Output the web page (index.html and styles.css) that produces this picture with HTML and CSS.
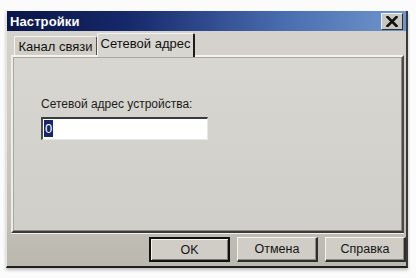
FILE: index.html
```html
<!DOCTYPE html>
<html>
<head>
<meta charset="utf-8">
<link rel="stylesheet" href="styles.css">
</head>
<body>
<div class="window">
  <div class="titlebar">
    <span class="title">Настройки</span>
    <span class="close">
      <svg width="12" height="11" viewBox="0 0 12 11"><path d="M1.5 1 L10.5 10 M10.5 1 L1.5 10" stroke="#111" stroke-width="2.6" stroke-linecap="square"/></svg>
    </span>
  </div>
  <div class="content">
    <div class="tabs">
      <div class="tab">Канал связи</div>
      <div class="tab active">Сетевой адрес</div>
    </div>
    <div class="panel">
      <div class="label">Сетевой адрес устройства:</div>
      <div class="input"><span class="sel">0</span></div>
    </div>
    <div class="buttons">
      <div class="btn default">OK</div>
      <div class="btn">Отмена</div>
      <div class="btn">Справка</div>
    </div>
  </div>
</div>
</body>
</html>
```
FILE: styles.css
```css
html, body {
  margin: 0;
  padding: 0;
  background: #fbfbfb;
  width: 416px;
  height: 278px;
  overflow: hidden;
  font-family: "Liberation Sans", Arial, sans-serif;
}
.window {
  margin: 11px 0 0 6px;
  width: 402px;
  height: 257px;
  box-sizing: border-box;
  background: linear-gradient(to bottom, #d6d4ce 0%, #cdcac3 50%, #bbb8b0 100%);
  border-right: 2px solid #3a3a38;
  border-bottom: 2px solid #1e1e1c;
  border-left: 1px solid #e6e4de;
  box-shadow: 0 2px 3px rgba(0,0,0,0.25);
  display: flex;
  flex-direction: column;
}
.titlebar {
  height: 20px;
  background: linear-gradient(to right, #0a1548 0%, #15286a 30%, #4a6eb0 70%, #7096cc 100%);
  display: flex;
  align-items: center;
  justify-content: space-between;
  padding: 0 3px 0 3px;
}
.title {
  color: #fff;
  font-weight: bold;
  font-size: 13px;
  letter-spacing: 0.1px;
}
.close {
  width: 20px;
  height: 15px;
  background: #c8c6c0;
  border-top: 1px solid #f2f2f0;
  border-left: 1px solid #f2f2f0;
  border-right: 1px solid #303030;
  border-bottom: 1px solid #303030;
  display: flex;
  align-items: center;
  justify-content: center;
}
.content {
  flex: 1;
  display: flex;
  flex-direction: column;
  padding: 1px 0 0 4px;
}
.tabs {
  display: flex;
  align-items: flex-end;
  height: 23px;
  padding-left: 3px;
  position: relative;
  z-index: 1;
}
.tab {
  height: 19px;
  padding: 0;
  box-sizing: border-box;
  border-top: 1px solid #f4f3ef;
  border-left: 1px solid #f4f3ef;
  border-right: 1px solid #505050;
  border-radius: 2px 2px 0 0;
  font-size: 13px;
  color: #111;
  line-height: 19px;
  background: #d0cec7;
  width: 83px;
  text-align: center;
  white-space: nowrap;
}
.tab.active {
  height: 24px;
  width: 98px;
  margin-bottom: -2px;
  line-height: 20px;
  background: #d8d6d0;
  border-right: 2px solid #1a1a1a;
}
.panel {
  width: 393px;
  height: 178px;
  box-sizing: border-box;
  border-top: 2px solid #f4f3ef;
  border-left: 2px solid #eeede8;
  border-right: 2px solid #4a4a48;
  border-bottom: 2px solid #3a3a38;
  box-shadow: inset -1px -1px 0 #8a8882, inset 1px 1px 0 #a8a69f, 0 1px 0 #f0efea;
  padding: 40px 0 0 28px;
  background: linear-gradient(to bottom, #d8d6d0 0%, #d0cec8 100%);
}
.label {
  font-size: 12px;
  color: #1c1c1c;
  line-height: 14px;
}
.input {
  margin-top: 6px;
  width: 167px;
  height: 23px;
  box-sizing: border-box;
  background: #fff;
  border-top: 2px solid #3a3a3a;
  border-left: 2px solid #4a4a4a;
  border-right: 1px solid #e8e8e4;
  border-bottom: 1px solid #e8e8e4;
  padding: 1px 0 0 1px;
  display: flex;
  align-items: flex-start;
}
.sel {
  background: #16266a;
  color: #fff;
  font-size: 13px;
  line-height: 17px;
  padding: 0 1px;
}
.buttons {
  display: flex;
  justify-content: flex-end;
  gap: 7px;
  margin-top: 4px;
}
.btn {
  width: 81px;
  height: 25px;
  box-sizing: border-box;
  border-top: 1px solid #f4f3ef;
  border-left: 1px solid #f4f3ef;
  border-right: 2px solid #2e2e2c;
  border-bottom: 2px solid #2e2e2c;
  box-shadow: inset -1px -1px 0 #8c8a84;
  font-size: 12.5px;
  color: #151515;
  display: flex;
  align-items: center;
  justify-content: center;
  background: #cfcdc6;
}
.btn.default {
  border: 2px solid #111;
  box-shadow: inset 1px 1px 0 #f4f3ef, inset -1px -1px 0 #7a7872;
}
```
